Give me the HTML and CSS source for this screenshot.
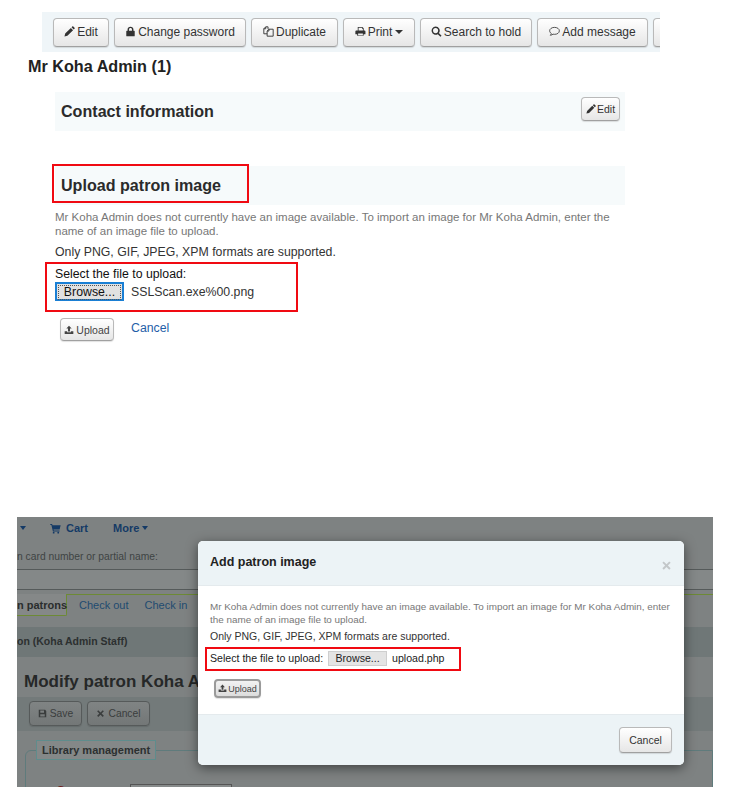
FILE: index.html
```html
<!DOCTYPE html>
<html lang="en">
<head>
    <meta charset="UTF-8">
    <meta name="viewport" content="width=device-width, initial-scale=1.0">
    <title>Upload patron image</title>
    <link rel="stylesheet" href="styles.css">
</head>
<body>
    <svg class="sprite" width="0" height="0">
        <symbol id="i-pencil" viewBox="0 0 12 12"><path d="M0.5 11.5l0.8-3.2 6.2-6.2 2.4 2.4-6.2 6.2zM8.2 1.4l0.9-0.9c0.3-0.3 0.7-0.3 1 0l1.4 1.4c0.3 0.3 0.3 0.7 0 1l-0.9 0.9z"/></symbol>
        <symbol id="i-lock" viewBox="0 0 12 12"><path d="M2 5.2h0.8V3.8C2.8 2 4.2 0.8 6 0.8s3.2 1.2 3.2 3v1.4H10c0.4 0 0.6 0.3 0.6 0.6v4.8c0 0.4-0.2 0.6-0.6 0.6H2c-0.4 0-0.6-0.2-0.6-0.6V5.8c0-0.3 0.2-0.6 0.6-0.6zM4.4 5.2h3.2V3.8C7.6 2.9 6.9 2.3 6 2.3s-1.6 0.6-1.6 1.5z"/></symbol>
        <symbol id="i-copy" viewBox="0 0 12 12"><path fill="none" stroke="currentColor" d="M5.500 3.500V0.900H3L0.900 3V8.500H4.500M0.900 3H3V0.900M4.500 11.100V5.500L6.500 3.500H11.100V11.100ZM4.500 5.500H6.500V3.500"/></symbol>
        <symbol id="i-print" viewBox="0 0 12 12"><path d="M3 1h5l1.5 1.5V5h1c0.5 0 0.9 0.400 0.900 0.900V9h-2v1.500h-7V9h-2V5.900C0.400 5.400 0.800 5 1.300 5H3zM3.900 1.900V5h4.700V2.900h-1v-1zM3.400 8.200v1.900h5.200V8.200z"/></symbol>
        <symbol id="i-search" viewBox="0 0 12 12"><path d="M5 0.500a4.500 4.500 0 0 1 3.600 7.200l2.900 2.900-1.200 1.200-2.900-2.900a4.500 4.500 0 1 1-2.400-8.400zM5 2.200a2.800 2.800 0 1 0 0 5.600 2.800 2.800 0 0 0 0-5.600z"/></symbol>
        <symbol id="i-comment" viewBox="0 0 12 12"><path fill="none" stroke="currentColor" stroke-width="0.900" d="M6 1.500c3 0 5.300 1.600 5.300 3.800s-2.300 3.800-5.300 3.800c-0.600 0-1.100-0.100-1.600-0.200-0.800 0.700-1.800 1.100-3 1.200 0.600-0.600 1-1.300 1.100-2C1.500 7.400 0.700 6.400 0.700 5.300 0.700 3.100 3 1.500 6 1.500z"/></symbol>
        <symbol id="i-upload" viewBox="0 0 12 12"><path d="M6 0.800l3.200 3.400h-2v3.600H4.800V4.200h-2zM0.800 7.400h3v1.400h4.400V7.400h3v3.400H0.800z"/></symbol>
        <symbol id="i-cart" viewBox="0 0 12 12"><path d="M0.300 1.200h2l0.400 1.300h8.900l-1.100 4.700H3.800l0.300 1h6.300v1H3.200l-1.700-7H0.300z"/><circle cx="4" cy="10.500" r="1"/><circle cx="9" cy="10.500" r="1"/></symbol>
        <symbol id="i-save" viewBox="0 0 12 12"><path fill-rule="evenodd" d="M1 1h8.500L11 2.500V11H1zM3 2v3h5V2zM3 7v3h6V7z"/></symbol>
        <symbol id="i-times" viewBox="0 0 12 12"><path d="M3 1.500l3 3 3-3L10.500 3l-3 3 3 3L9 10.500l-3-3-3 3L1.500 9l3-3-3-3z"/></symbol>
    </svg>

    <div class="patron-shot">
        <div class="toolbar">
            <a class="btn btn-edit"><svg class="ico"><use href="#i-pencil"/></svg>Edit</a>
            <a class="btn btn-pass"><svg class="ico"><use href="#i-lock"/></svg>Change password</a>
            <a class="btn btn-dup"><svg class="ico"><use href="#i-copy"/></svg>Duplicate</a>
            <a class="btn btn-print"><svg class="ico"><use href="#i-print"/></svg>Print<span class="caret"></span></a>
            <a class="btn btn-hold"><svg class="ico"><use href="#i-search"/></svg>Search to hold</a>
            <a class="btn btn-msg"><svg class="ico"><use href="#i-comment"/></svg>Add message</a>
            <a class="btn btn-cut"></a>
        </div>
        <h3 class="patron-name">Mr Koha Admin (1)</h3>
        <div class="band band-contact">
            <h3>Contact information</h3>
            <a class="btn btn-small"><svg class="ico"><use href="#i-pencil"/></svg>Edit</a>
        </div>
        <div class="band band-upload">
            <h3>Upload patron image</h3>
            <div class="redbox redbox-head"></div>
        </div>
        <p class="hint">Mr Koha Admin does not currently have an image available. To import an image for Mr Koha Admin, enter the name of an image file to upload.</p>
        <p class="formats">Only PNG, GIF, JPEG, XPM formats are supported.</p>
        <div class="file-row">
            <div class="redbox redbox-file"></div>
            <div class="file-label">Select the file to upload:</div>
            <div class="file-pick">
                <span class="browse"><span class="browse-inner">Browse...</span></span>
                <span class="file-name">SSLScan.exe%00.png</span>
            </div>
        </div>
        <div class="upload-actions">
            <a class="btn btn-upload"><svg class="ico"><use href="#i-upload"/></svg>Upload</a>
            <a class="cancel-link">Cancel</a>
        </div>
    </div>

    <div class="modal-shot">
        <div class="page-nav">
            <span class="caret nav-caret"></span>
            <a class="nav-item nav-cart"><svg class="ico"><use href="#i-cart"/></svg>Cart</a>
            <a class="nav-item nav-more">More<span class="caret nav-caret"></span></a>
        </div>
        <div class="search-label">n card number or partial name:</div>
        <div class="search-input"></div>
        <div class="tabs">
            <span class="tab-on">n patrons</span>
            <div class="tabs-rest">
                <a>Check out</a>
                <a>Check in</a>
            </div>
        </div>
        <div class="crumb">on (Koha Admin Staff)</div>
        <h1 class="page-title">Modify patron Koha A</h1>
        <div class="dark-toolbar">
            <a class="btn btn-dark btn-save"><svg class="ico"><use href="#i-save"/></svg>Save</a>
            <a class="btn btn-dark btn-dark-cancel"><svg class="ico"><use href="#i-times"/></svg>Cancel</a>
        </div>
        <fieldset class="lib-fieldset">
            <legend>Library management</legend>
            <div class="surname-row">
                <label>Surname:</label>
                <span class="surname-input"></span>
            </div>
        </fieldset>

        <div class="modal">
            <div class="modal-head">
                <h3>Add patron image</h3>
                <svg class="modal-close"><use href="#i-times"/></svg>
            </div>
            <div class="modal-body">
                <p class="hint hint-modal">Mr Koha Admin does not currently have an image available. To import an image for Mr Koha Admin, enter the name of an image file to upload.</p>
                <p class="formats formats-modal">Only PNG, GIF, JPEG, XPM formats are supported.</p>
                <div class="modal-file">
                    <div class="redbox redbox-modal"></div>
                    <span>Select the file to upload:</span>
                    <span class="browse-flat">Browse...</span>
                    <span>upload.php</span>
                </div>
                <a class="btn btn-upload btn-upload-modal"><svg class="ico"><use href="#i-upload"/></svg>Upload</a>
            </div>
            <div class="modal-foot">
                <a class="btn btn-foot">Cancel</a>
            </div>
        </div>
    </div>
</body>
</html>
```

FILE: styles.css
```css
body {
    margin: 0;
    background: #fff;
    font-family: "Liberation Sans", Arial, sans-serif;
    color: #222;
    height: 807px;
    overflow: hidden;
}

h1, h3, p {
    margin: 0;
}

.sprite {
    position: absolute;
}

.ico {
    width: 11px;
    height: 11px;
    fill: currentColor;
    margin-right: 2px;
    flex: none;
}

.caret {
    display: inline-block;
    width: 0;
    height: 0;
    margin-left: 3px;
    border-left: 4px solid transparent;
    border-right: 4px solid transparent;
    border-top: 4px solid currentColor;
}

/* Buttons */
.btn {
    display: flex;
    align-items: center;
    justify-content: center;
    box-sizing: border-box;
    height: 29px;
    flex: none;
    font-size: 12px;
    color: #333;
    background: linear-gradient(#fff, #e6e6e6);
    border: 1px solid #b9b9b9;
    border-bottom-color: #a0a0a0;
    border-radius: 4px;
    box-shadow: 0 1px 1px rgba(0, 0, 0, 0.12);
}

/* Top screenshot */
.patron-shot {
    height: 517px;
    padding-top: 12px;
    box-sizing: border-box;
}

.toolbar {
    display: flex;
    width: 618px;
    height: 40px;
    margin-left: 42px;
    padding: 6px 0 0 11px;
    box-sizing: border-box;
    gap: 5px;
    background: #eff5f8;
    overflow: hidden;
}

.toolbar .btn {
    padding-bottom: 2px;
}

.btn-edit { width: 56px; }
.btn-pass { width: 132px; }
.btn-dup { width: 87px; }
.btn-print { width: 72px; }
.btn-hold { width: 112px; }
.btn-msg { width: 111px; }
.btn-cut { width: 40px; }

.patron-name {
    margin: 5px 0 0 28px;
    font-size: 16.200px;
    line-height: 18px;
    color: #222;
}

.band {
    display: flex;
    align-items: center;
    justify-content: space-between;
    position: relative;
    box-sizing: border-box;
    width: 570px;
    height: 39px;
    margin-left: 55px;
    padding: 0 5px 0 6px;
    background: #f6fafb;
}

.band h3 {
    font-size: 16.100px;
    color: #2b2b2b;
}

.band-contact {
    margin-top: 17px;
}

.band-upload {
    margin-top: 35px;
}

.btn-small {
    align-self: flex-start;
    width: 39px;
    height: 24px;
    margin-top: 5px;
    font-size: 10.500px;
}

.btn-small .ico {
    width: 10px;
    height: 10px;
    margin-right: 1px;
}

.redbox {
    position: absolute;
    box-sizing: border-box;
    border: 2px solid #f00a12;
    pointer-events: none;
}

.redbox-head {
    left: -3px;
    top: -2px;
    width: 197px;
    height: 39px;
}

.hint {
    width: 570px;
    margin: 5px 0 0 55px;
    font-size: 11.500px;
    line-height: 14px;
    color: #777;
}

.formats {
    margin: 7px 0 0 55px;
    font-size: 12.300px;
    line-height: 15px;
    color: #333;
}

.file-row {
    position: relative;
    margin: 5px 0 0 55px;
    height: 42px;
}

.redbox-file {
    left: -10px;
    top: -3px;
    width: 253px;
    height: 50px;
}

.file-label {
    font-size: 12.300px;
    line-height: 15px;
    padding-top: 2px;
    color: #111;
}

.file-pick {
    display: flex;
    align-items: center;
    font-size: 12.300px;
    color: #333;
}

.browse {
    box-sizing: border-box;
    width: 69px;
    height: 19px;
    padding: 1px;
    margin-right: 7px;
    background: #e1e1e1;
    border: 2px solid #1a7fd4;
}

.browse-inner {
    display: block;
    height: 13px;
    line-height: 13px;
    text-align: center;
    color: #111;
    border: 1px dotted #555;
}

.upload-actions {
    display: flex;
    align-items: center;
    margin: 11px 0 0 60px;
}

.btn-upload {
    width: 54px;
    height: 23px;
    font-size: 10.500px;
    color: #444;
}

.btn-upload .ico {
    width: 10px;
    height: 10px;
    margin-right: 2px;
}

.cancel-link {
    margin: -3px 0 0 17px;
    font-size: 12.300px;
    color: #1f5ea8;
}

/* Bottom screenshot, page behind the dialog is dimmed */
.modal-shot {
    position: relative;
    width: 696px;
    height: 270px;
    margin-left: 17px;
    background: #7e8282;
    color: #2c2f2f;
    overflow: hidden;
}

.page-nav {
    display: flex;
    align-items: center;
    height: 22px;
    font-size: 11px;
    font-weight: bold;
    color: #143a66;
}

.nav-caret {
    border-left-width: 3px;
    border-right-width: 3px;
}

.nav-item {
    display: flex;
    align-items: center;
}

.nav-cart {
    margin-left: 24px;
}

.nav-cart .ico {
    margin-right: 5px;
}

.nav-more {
    margin-left: 25px;
}

.search-label {
    margin-top: 12px;
    font-size: 10.300px;
    line-height: 12px;
    color: #3f4444;
}

.search-input {
    box-sizing: border-box;
    height: 21px;
    margin-top: 6px;
    border-top: 1px solid #555a5a;
    border-bottom: 1px solid #555a5a;
    background: #848888;
}

.tabs {
    display: flex;
    align-items: flex-start;
    box-sizing: border-box;
    height: 37px;
    padding-top: 4px;
    font-size: 11px;
    color: #1e4b70;
}

.tab-on {
    display: flex;
    align-items: center;
    box-sizing: border-box;
    width: 50px;
    height: 22px;
    white-space: nowrap;
    font-size: 11px;
    font-weight: bold;
    color: #2a2d2d;
    background: #858888;
    border-right: 1px solid #6d8a35;
    border-bottom: 1px solid #6d8a35;
    border-radius: 0 0 2px 0;
}

.tabs-rest {
    flex: 1;
    display: flex;
    gap: 16px;
    box-sizing: border-box;
    height: 22px;
    padding: 4px 0 0 12px;
    border-top: 1px solid #6d8a35;
}

.crumb {
    display: flex;
    align-items: center;
    box-sizing: border-box;
    height: 30px;
    padding-bottom: 2px;
    font-size: 10.500px;
    font-weight: bold;
    color: #2c3030;
    background: #6f7777;
}

.page-title {
    margin: 15px 0 0 7px;
    height: 20px;
    font-size: 17px;
    line-height: 20px;
    white-space: nowrap;
    color: #262828;
}

.dark-toolbar {
    display: flex;
    gap: 5px;
    height: 34px;
    margin-top: 5px;
    padding: 4px 0 0 12px;
    box-sizing: border-box;
    background: #737a7a;
}

.btn-dark {
    height: 25px;
    font-size: 10.300px;
    color: #3a3d3d;
    background: linear-gradient(#808484, #737777);
    border-color: #565a5a;
}

.btn-dark .ico {
    width: 9px;
    height: 9px;
    margin-right: 3px;
}

.btn-save { width: 53px; }
.btn-dark-cancel { width: 63px; }

.lib-fieldset {
    margin: 9px 0 0 8px;
    padding: 0;
    border: 1px solid #5f7b7c;
    border-radius: 6px 0 0 0;
    height: 60px;
}

.lib-fieldset legend {
    margin-left: 10px;
    padding: 2px 5px;
    font-size: 11px;
    font-weight: bold;
    line-height: 14px;
    color: #2c3030;
    background: #848888;
    border: 1px solid #5f8c8c;
}

.surname-row {
    display: flex;
    margin-top: 24px;
    font-size: 11.500px;
}

.surname-row label {
    margin-left: 31px;
    width: 73px;
    font-weight: bold;
    color: #6d2020;
}

.surname-input {
    width: 100px;
    height: 20px;
    border: 1px solid #555;
    background: #878b8b;
}

.modal {
    position: absolute;
    left: 181px;
    top: 24px;
    width: 486px;
    height: 224px;
    display: flex;
    flex-direction: column;
    background: #fff;
    border-radius: 5px;
    box-shadow: 0 3px 12px rgba(0, 0, 0, 0.5);
    overflow: hidden;
}

.modal-head {
    display: flex;
    align-items: center;
    justify-content: space-between;
    box-sizing: border-box;
    height: 45px;
    padding: 0 12px 2px 12px;
    background: #ecf3f6;
    border-bottom: 1px solid #e4eaed;
}

.modal-head h3 {
    font-size: 12.500px;
    color: #222;
}

.modal-close {
    width: 11px;
    height: 11px;
    margin-top: 6px;
    fill: #c3c7c9;
}

.modal-body {
    flex: 1;
    padding: 14px 8px 0 12px;
}

.hint-modal {
    width: auto;
    margin: 0;
    font-size: 9.900px;
    line-height: 13px;
}

.formats-modal {
    margin: 4px 0 0;
    font-size: 10.500px;
    line-height: 13px;
}

.modal-file {
    position: relative;
    display: flex;
    align-items: center;
    gap: 5px;
    height: 20px;
    margin-top: 5px;
    font-size: 10.600px;
    color: #222;
}

.redbox-modal {
    left: -5px;
    top: -1px;
    width: 256px;
    height: 24px;
}

.browse-flat {
    box-sizing: border-box;
    width: 59px;
    height: 15px;
    line-height: 13px;
    text-align: center;
    background: #e4e4e4;
    border: 1px solid #cfcfcf;
}

.btn-upload-modal {
    width: 47px;
    height: 19px;
    margin: 11px 0 0 4px;
    font-size: 9px;
    background: linear-gradient(#f2f2f2, #dcdcdc);
    border: 2px solid #9a9a9a;
}

.btn-upload-modal .ico {
    width: 9px;
    height: 9px;
    margin-right: 1px;
}

.modal-foot {
    display: flex;
    align-items: center;
    justify-content: flex-end;
    box-sizing: border-box;
    height: 51px;
    padding: 0 12px;
    background: #ecf3f6;
    border-top: 1px solid #e4eaed;
}

.btn-foot {
    width: 53px;
    height: 26px;
    font-size: 10.500px;
}
```
